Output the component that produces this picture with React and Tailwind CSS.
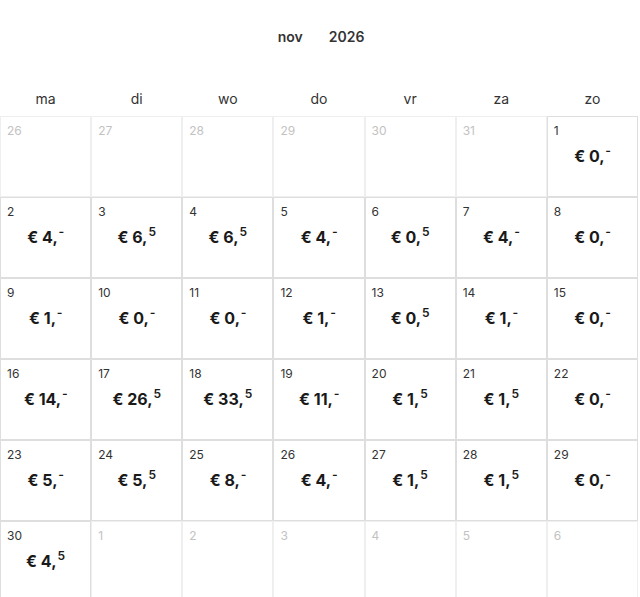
import React from 'react';

const days = ['ma', 'di', 'wo', 'do', 'vr', 'za', 'zo'];

const amounts = {
  1: ['0', '-'], 2: ['4', '-'], 3: ['6', '5'], 4: ['6', '5'], 5: ['4', '-'], 6: ['0', '5'], 7: ['4', '-'],
  8: ['0', '-'], 9: ['1', '-'], 10: ['0', '-'], 11: ['0', '-'], 12: ['1', '-'], 13: ['0', '5'], 14: ['1', '-'],
  15: ['0', '-'], 16: ['14', '-'], 17: ['26', '5'], 18: ['33', '5'], 19: ['11', '-'], 20: ['1', '5'], 21: ['1', '5'],
  22: ['0', '-'], 23: ['5', '-'], 24: ['5', '5'], 25: ['8', '-'], 26: ['4', '-'], 27: ['1', '5'], 28: ['1', '5'],
  29: ['0', '-'], 30: ['4', '5'],
};

const cells = [
  ...[26, 27, 28, 29, 30, 31].map((d) => ({ d, out: true })),
  ...Array.from({ length: 30 }, (_, i) => ({ d: i + 1, out: false })),
  ...[1, 2, 3, 4, 5, 6].map((d) => ({ d, out: true })),
];

const Cell = ({ d, out }) => {
  const amt = !out && amounts[d];
  return (
    <div className={`h-[81px] border px-[6px] pt-[6px] ${out ? 'border-[#efefef]' : 'border-[#dedede]'}`}>
      <div className={`text-[12px] leading-[16px] ${out ? 'text-[#c2c2c2]' : 'text-[#333]'}`}>{d}</div>
      {amt && (
        <div className="mt-[7px] text-center text-[16px] font-bold leading-[20px] text-[#1a1a1a]">
          € {amt[0]},
          <span className="relative top-[-7px] ml-[1px] text-[12px] font-semibold">{amt[1] === '-' ? '‐' : amt[1]}</span>
        </div>
      )}
    </div>
  );
};

export default function App() {
  return (
    <div className="w-[640px] bg-white font-['Inter',sans-serif]">
      <div className="flex justify-center gap-[26px] pt-[27px] pl-[2px] text-[14px] font-semibold leading-[20px] text-[#333]">
        <span>nov</span>
        <span>2026</span>
      </div>
      <div className="mt-[42px] grid w-[638px] grid-cols-7 text-[14px] leading-[20px] text-[#333]">
        {days.map((d) => (
          <div key={d} className="text-center">{d}</div>
        ))}
      </div>
      <div className="mt-[7px] grid w-[638px] grid-cols-7">
        {cells.map((c, i) => (
          <Cell key={i} {...c} />
        ))}
      </div>
    </div>
  );
}
